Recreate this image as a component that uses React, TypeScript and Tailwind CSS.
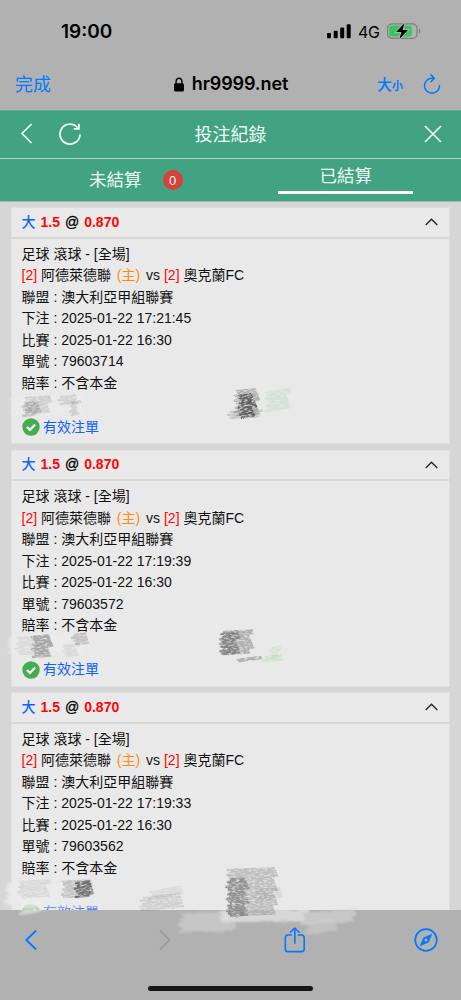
import React from 'react';

interface Bet {
  id: string;
  placedAt: string;
}

interface SmudgeProps {
  x: number;
  y: number;
  width: number;
  height: number;
  color: string;
  opacity: number;
  seed: number;
  skew?: number;
}

const bets: Bet[] = [
  { id: '79603714', placedAt: '2025-01-22 17:21:45' },
  { id: '79603572', placedAt: '2025-01-22 17:19:39' },
  { id: '79603562', placedAt: '2025-01-22 17:19:33' },
];

// 지우개 자국 (배경을 밝게 덮는 부분)
const erasers: SmudgeProps[] = [
  { x: 12, y: 397, width: 70, height: 18, color: '#ebebeb', opacity: 0.7, seed: 1 },
  { x: 10, y: 637, width: 74, height: 16, color: '#ebebeb', opacity: 0.8, seed: 8 },
  { x: 8, y: 884, width: 80, height: 20, color: '#ebebeb', opacity: 0.85, seed: 17 },
  { x: 22, y: 900, width: 78, height: 8, color: '#ebebeb', opacity: 0.5, seed: 34, skew: -1 },
  { x: 22, y: 905, width: 20, height: 9, color: '#ececec', opacity: 0.6, seed: 18, skew: -3 },
  { x: 182, y: 914, width: 52, height: 17, color: '#d4d4d4', opacity: 0.6, seed: 24, skew: -1 },
  { x: 222, y: 911, width: 84, height: 10, color: '#e4e4e4', opacity: 0.75, seed: 25, skew: -1 },
  { x: 302, y: 914, width: 52, height: 10, color: '#d4d4d4', opacity: 0.65, seed: 26, skew: -4 },
  { x: 308, y: 924, width: 28, height: 10, color: '#d0d0d0', opacity: 0.55, seed: 29, skew: -5 },
];

// 연필 자국
const pencils: SmudgeProps[] = [
  { x: 27, y: 398, width: 22, height: 15, color: '#777777', opacity: 0.25, seed: 2 },
  { x: 24, y: 404, width: 14, height: 12, color: '#555555', opacity: 0.28, seed: 21 },
  { x: 59, y: 397, width: 17, height: 7, color: '#777777', opacity: 0.22, seed: 3 },
  { x: 71, y: 403, width: 7, height: 12, color: '#777777', opacity: 0.25, seed: 30 },
  { x: 237, y: 391, width: 20, height: 24, color: '#555555', opacity: 0.36, seed: 4 },
  { x: 241, y: 396, width: 13, height: 21, color: '#111111', opacity: 0.5, seed: 5 },
  { x: 230, y: 412, width: 30, height: 6, color: '#555555', opacity: 0.22, seed: 6 },
  { x: 268, y: 393, width: 20, height: 18, color: '#a5d8a7', opacity: 0.32, seed: 7, skew: -4 },
  { x: 18, y: 638, width: 32, height: 16, color: '#999999', opacity: 0.2, seed: 9 },
  { x: 34, y: 637, width: 16, height: 20, color: '#555555', opacity: 0.4, seed: 10 },
  { x: 74, y: 635, width: 14, height: 9, color: '#777777', opacity: 0.36, seed: 11 },
  { x: 65, y: 646, width: 12, height: 10, color: '#888888', opacity: 0.18, seed: 12 },
  { x: 222, y: 632, width: 29, height: 22, color: '#555555', opacity: 0.38, seed: 13 },
  { x: 222, y: 634, width: 15, height: 20, color: '#222222', opacity: 0.3, seed: 14 },
  { x: 240, y: 660, width: 21, height: 1, color: '#444444', opacity: 0.35, seed: 15, skew: -3 },
  { x: 265, y: 657, width: 18, height: 4, color: '#a5d8a7', opacity: 0.4, seed: 16 },
  { x: 272, y: 648, width: 7, height: 10, color: '#a5d8a7', opacity: 0.28, seed: 31 },
  { x: 20, y: 882, width: 28, height: 15, color: '#888888', opacity: 0.18, seed: 19 },
  { x: 64, y: 882, width: 26, height: 15, color: '#666666', opacity: 0.3, seed: 20 },
  { x: 77, y: 883, width: 14, height: 14, color: '#111111', opacity: 0.46, seed: 22 },
  { x: 142, y: 898, width: 40, height: 12, color: '#777777', opacity: 0.22, seed: 23, skew: -4 },
  { x: 152, y: 892, width: 28, height: 6, color: '#888888', opacity: 0.15, seed: 32, skew: -5 },
  { x: 229, y: 870, width: 46, height: 45, color: '#666666', opacity: 0.32, seed: 27 },
  { x: 229, y: 880, width: 17, height: 36, color: '#333333', opacity: 0.32, seed: 28 },
  { x: 258, y: 890, width: 22, height: 10, color: '#777777', opacity: 0.14, seed: 33 },
];

const cjk = "font-['Liberation_Sans','Noto_Sans_CJK_TC',sans-serif]";

// 좌우로 왕복하는 가로 획
const Smudge: React.FC<SmudgeProps> = ({ x, y, width, height, color, opacity, seed, skew = -1.5 }) => {
  const rows = Math.max(2, Math.round(height / 2.2));
  const points: string[] = [];
  for (let i = 0; i < rows; i++) {
    const rowY = y + (i / (rows - 1)) * height;
    const left = x + ((i * 7 + seed * 3) % 5) - 2;
    const right = x + width - ((i * 5 + seed) % 6) + 2;
    points.push(`${left},${rowY}`, `${right},${rowY + skew}`);
  }
  return (
    <polyline
      points={points.join(' ')}
      fill="none"
      stroke={color}
      strokeWidth={2.6}
      strokeLinejoin="round"
      strokeLinecap="round"
      opacity={opacity}
    />
  );
};

const StatusBar: React.FC = () => (
  <div className="flex h-[62px] items-center justify-between pl-[61px] pr-[40px]">
    <span className="font-['Inter',sans-serif] text-[19px] font-semibold leading-none">19:00</span>
    <div className="flex items-center">
      <svg className="h-[15px] w-6" viewBox="0 0 24 15">
        <rect x="0" y="9" width="4" height="5.3" rx="1" />
        <rect x="6.7" y="6.7" width="4" height="7.6" rx="1" />
        <rect x="13.2" y="3.6" width="4" height="10.7" rx="1" />
        <rect x="19.7" y="0.2" width="4" height="14.1" rx="1" />
      </svg>
      <span className="ml-[7px] mt-px w-[22px] font-['Inter',sans-serif] text-[16px] leading-none tracking-[-0.3px]">
        4G
      </span>
      <svg className="ml-[7px] h-4 w-[34px]" viewBox="0 0 34 16">
        <rect x="0.6" y="0.9" width="29.4" height="14.4" rx="4.4" fill="none" stroke="#818181" strokeWidth="1.2" />
        <rect x="2.3" y="2.6" width="22.5" height="11" rx="3" fill="#34c759" />
        <path d="M31.8 5.5c2 .7 2 4.5 0 5.2z" fill="#818181" />
        <path d="M17.2.3 9.2 9h5.2l-1.9 7 8.5-9h-5.4z" stroke="#b1b1b1" strokeWidth="2" />
        <path d="M17.2.3 9.2 9h5.2l-1.9 7 8.5-9h-5.4z" />
      </svg>
    </div>
  </div>
);

const AddressBar: React.FC = () => (
  <div className="grid h-12 grid-cols-[1fr_auto_1fr] items-center pl-[21px] pr-5 pb-1 text-[#007aff]">
    <span className={`${cjk} -ml-1.5 mt-px text-[18px] leading-none`}>完成</span>
    <div className="flex items-center text-black">
      <svg className="mr-2 h-[15px] w-[10px]" viewBox="0 0 10 15">
        <rect x="0" y="6.2" width="10" height="8.3" rx="1.5" />
        <path d="M2.1 7V4.2C2.1.2 7.9.2 7.9 4.2V7" fill="none" stroke="currentColor" strokeWidth="1.4" />
      </svg>
      <span className="font-['Inter',sans-serif] text-[18px] font-semibold leading-none tracking-[-0.1px]">hr9999.net</span>
    </div>
    <div className="flex items-center justify-end">
      <span className={`${cjk} flex items-baseline font-medium leading-none`}>
        <span className="text-[15px]">大</span>
        <span className="text-[11px] [-webkit-text-stroke:0.3px_#007aff]">小</span>
      </span>
      <svg className="ml-[20px] h-5 w-[18px]" viewBox="0 0 18 20" fill="none" stroke="currentColor" strokeWidth="1.5" strokeLinecap="round" strokeLinejoin="round">
        <path d="M11.2 4.2H9A7.5 7.5 0 1 0 16.5 11.6M8 .9l3.4 3.4L8 7.7" />
      </svg>
    </div>
  </div>
);

const PageHeader: React.FC = () => (
  <header className={`${cjk} bg-[#41a381] text-[#f1f8f5]`}>
    <div className="grid h-12 grid-cols-[1fr_auto_1fr] items-center border-t border-[#5fae93] pl-5 pr-[19px] pb-0.5">
      <div className="flex items-center gap-[26px]">
        <svg className="h-[21px] w-[13px]" viewBox="0 0 13 21" fill="none" stroke="currentColor" strokeWidth="1.7">
          <path d="M11.6 1 2 10.5l9.6 9.5" />
        </svg>
        <svg className="h-[22px] w-[22px]" viewBox="0 0 22 22" fill="none" stroke="currentColor" strokeWidth="1.8">
          <path d="M21 11.5A10 10 0 1 1 18.6 4.6M19.9.8v5.1h-5.2" />
        </svg>
      </div>
      <h1 className="-ml-px mt-0.5 text-[18px] leading-none">投注紀錄</h1>
      <svg className="h-[18px] w-[18px] justify-self-end" viewBox="0 0 18 18" fill="none" stroke="currentColor" strokeWidth="1.7">
        <path d="m1 1 16 16M17 1 1 17" />
      </svg>
    </div>
    <nav className="grid h-11 grid-cols-2 border-b border-t border-b-[#8fc0ae] border-t-[#b3cfc5] text-[17.5px] leading-none">
      <div className="flex items-center pl-[89px]">
        <span className="mt-px">未結算</span>
        <span className="ml-[21px] flex h-5 w-5 items-center justify-center rounded-full bg-[#d9403a] text-[13px]">0</span>
      </div>
      <div className="flex flex-col items-center pt-[9px]">
        <span>已結算</span>
        <span className="mt-[5px] h-[3px] w-[135px] bg-white" />
      </div>
    </nav>
  </header>
);

const BetCard: React.FC<{ bet: Bet }> = ({ bet }) => (
  <article className="h-[237px] shrink-0 border border-[#e0e0e0] bg-[#e9e9e9]">
    <div className="flex h-[30.5px] items-center justify-between border-b-2 border-[#d8d8d8] pl-[9.5px] pr-[11px] text-[14px] font-bold">
      <div className="flex gap-[5px]">
        <span className="font-medium text-[#0d62fe]">大</span>
        <span className="text-[#ff0505]">1.5</span>
        <span className="font-normal [-webkit-text-stroke:0.3px_black]">@</span>
        <span className="text-[#ff0505]">0.870</span>
      </div>
      <svg className="h-2 w-[13px]" viewBox="0 0 13 8" fill="none" stroke="#222" strokeWidth="1.3">
        <path d="M.7 7 6.5 1.2 12.3 7" />
      </svg>
    </div>
    <div className="px-[9.5px] pt-[5px] text-[14px] leading-[21.5px] text-[#111]">
      <p>足球 滾球 - [全場]</p>
      <p>
        <span className="text-[#ff0505]">[2]</span> 阿德萊德聯{' '}
        <span className="ml-0.5 mr-0.5 text-[#ff8c0a]">(主)</span> vs <span className="text-[#ff0505]">[2]</span> 奧克蘭FC
      </p>
      <p>聯盟 : 澳大利亞甲組聯賽</p>
      <p>下注 : {bet.placedAt}</p>
      <p>比賽 : 2025-01-22 16:30</p>
      <p>單號 : {bet.id}</p>
      <p>賠率 : 不含本金</p>
      <div className="mt-[22.5px] flex items-center text-[#0d62fe]">
        <svg className="mr-[3.5px] h-[18px] w-[18px]" viewBox="0 0 18 18">
          <circle cx="9" cy="9" r="8.7" fill="#45ad50" />
          <path d="m5 9 2.9 2.9 5.2-5.5" fill="none" stroke="white" strokeWidth="2.2" />
        </svg>
        有效注單
      </div>
    </div>
  </article>
);

const BottomBar: React.FC = () => (
  <footer className="flex h-[90px] shrink-0 flex-col items-center bg-[#b1b1b1]">
    <div className="flex h-[60px] w-full items-center pl-[25px] pr-[23px] text-[#007aff]">
      <svg className="h-5 w-3" viewBox="0 0 12 20" fill="none" stroke="currentColor" strokeWidth="1.8" strokeLinecap="round" strokeLinejoin="round">
        <path d="M10.7 1 1.2 10l9.5 9" />
      </svg>
      <svg className="ml-[122px] h-5 w-3 text-[#999]" viewBox="0 0 12 20" fill="none" stroke="currentColor" strokeWidth="1.4" strokeLinecap="round" strokeLinejoin="round">
        <path d="m1.3 1 9.5 9-9.5 9" />
      </svg>
      <svg className="ml-[113px] h-[26px] w-[22px]" viewBox="0 0 22 26" fill="none" stroke="currentColor" strokeWidth="1.6" strokeLinecap="round" strokeLinejoin="round">
        <path d="M7.3 8H4C2.2 8 1.3 8.9 1.3 10.7v11.2c0 1.8.9 2.7 2.7 2.7h13.5c1.8 0 2.7-.9 2.7-2.7V10.7c0-1.8-.9-2.7-2.7-2.7h-3.2M10.8 16.3V1.2M6.5 5.2l4.3-4.2 4.3 4.2" />
      </svg>
      <svg className="ml-auto h-6 w-6" viewBox="0 0 24 24" fill="none" stroke="currentColor" strokeWidth="1.7">
        <circle cx="12" cy="12" r="10.8" />
        <path d="M18.3 5.7 14.6 14.6 5.7 18.3l3.7-8.9z" fill="currentColor" stroke="none" />
        <circle cx="12" cy="12" r="1.5" fill="#b1b1b1" stroke="none" />
      </svg>
    </div>
    <div className="mt-[16px] h-[5px] w-[165px] rounded-full bg-[#161616]" />
  </footer>
);

const App: React.FC = () => {
  return (
    <div className="relative flex h-[1000px] w-[461px] flex-col overflow-hidden bg-[#b1b1b1] text-black">
      <StatusBar />
      <AddressBar />
      <PageHeader />
      <main className={`${cjk} flex min-h-0 flex-1 flex-col gap-[5.5px] overflow-hidden bg-[#d6d6d6] pl-[11px] pr-[11px] pt-[5px]`}>
        {bets.map(bet => (
          <BetCard key={bet.id} bet={bet} />
        ))}
      </main>
      <BottomBar />
      <svg className="pointer-events-none absolute inset-0 h-full w-full" viewBox="0 0 461 1000">
        <defs>
          <filter id="eraser" x="0" y="0" width="461" height="1000" filterUnits="userSpaceOnUse" colorInterpolationFilters="sRGB">
            <feTurbulence type="fractalNoise" baseFrequency="0.08 0.4" numOctaves="3" seed="9" result="noise" />
            <feDisplacementMap in="SourceGraphic" in2="noise" scale="5" xChannelSelector="R" yChannelSelector="G" />
            <feGaussianBlur stdDeviation="0.9" />
          </filter>
          <filter id="pencil" x="0" y="0" width="461" height="1000" filterUnits="userSpaceOnUse" colorInterpolationFilters="sRGB">
            <feTurbulence type="fractalNoise" baseFrequency="0.25 0.6" numOctaves="3" seed="4" result="noise" />
            <feDisplacementMap in="SourceGraphic" in2="noise" scale="2" xChannelSelector="R" yChannelSelector="G" result="rough" />
            <feColorMatrix in="noise" values="0 0 0 0 0  0 0 0 0 0  0 0 0 0 0  2.2 0 0 0 -0.25" result="grain" />
            <feComposite in="rough" in2="grain" operator="in" />
            <feGaussianBlur stdDeviation="0.55" />
          </filter>
        </defs>
        <g filter="url(#eraser)">
          {erasers.map(smudge => (
            <Smudge key={smudge.seed} {...smudge} />
          ))}
        </g>
        <g filter="url(#pencil)">
          {pencils.map(smudge => (
            <Smudge key={smudge.seed} {...smudge} />
          ))}
        </g>
      </svg>
    </div>
  );
};

export default App;
